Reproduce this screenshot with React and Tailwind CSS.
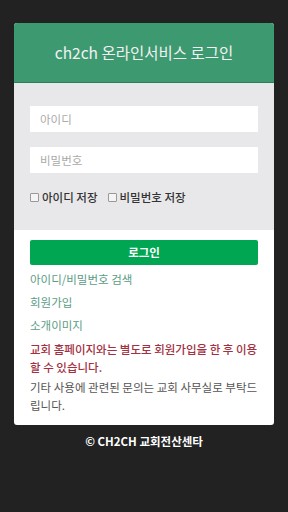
import React from 'react';

const font = { fontFamily: '"Noto Sans CJK KR", "Noto Sans", sans-serif' };

export default function App() {
    return (
        <div className="min-h-[512px] bg-[#222222] pt-[23px]" style={font}>
            <div className="mx-[14px] rounded-[3px] overflow-hidden bg-white">
                {/* 헤더 */}
                <div className="h-[60px] bg-[#3d9970] border-b border-[#2f7d5a] flex items-center justify-center">
                    <h1 className="text-[15.5px] text-[#f2f2f2] font-normal">ch2ch 온라인서비스 로그인</h1>
                </div>

                {/* 입력 영역 */}
                <div className="bg-[#e8e8ea] px-4 pt-[23px] pb-[24px]">
                    <input
                        type="text"
                        placeholder="아이디"
                        className="block w-full h-[26px] bg-white px-[10px] text-[11.5px] text-[#333] placeholder-[#aaaaaa] outline-none"
                    />
                    <input
                        type="password"
                        placeholder="비밀번호"
                        className="block w-full h-[26px] bg-white px-[10px] mt-[15px] text-[11.5px] text-[#333] placeholder-[#aaaaaa] outline-none"
                    />
                    <div className="flex items-center gap-[10px] mt-[16px] text-[11.5px] font-medium text-[#333]">
                        <label className="flex items-center gap-[3px]">
                            <span className="w-[9px] h-[9px] border border-[#999] bg-[#f4f4f4] rounded-[1px]" />
                            아이디 저장
                        </label>
                        <label className="flex items-center gap-[3px]">
                            <span className="w-[9px] h-[9px] border border-[#999] bg-[#f4f4f4] rounded-[1px]" />
                            비밀번호 저장
                        </label>
                    </div>
                </div>

                {/* 버튼 및 안내 */}
                <div className="px-4 pt-[8px] pb-[11px]">
                    <button className="w-full h-[25px] bg-[#00a651] text-white text-[11.5px] font-bold rounded-[2px]">
                        로그인
                    </button>
                    <div className="mt-[3px] text-[11.5px] text-[#5c9c86] leading-[22px]">
                        <p className="mb-[1px]">아이디/비밀번호 검색</p>
                        <p className="mb-[1px]">회원가입</p>
                        <p>소개이미지</p>
                    </div>
                    <p className="mt-[4px] text-[11.5px] text-[#a3303f] font-medium leading-[18px]">
                        교회 홈페이지와는 별도로 회원가입을 한 후 이용할 수 있습니다.
                    </p>
                    <p className="mt-[2px] text-[11.5px] text-[#555] leading-[18px]">
                        기타 사용에 관련된 문의는 교회 사무실로 부탁드립니다.
                    </p>
                </div>
            </div>

            <p className="mt-[8px] text-center text-[11.5px] font-bold text-white">
                © CH2CH 교회전산센타
            </p>
        </div>
    );
}
